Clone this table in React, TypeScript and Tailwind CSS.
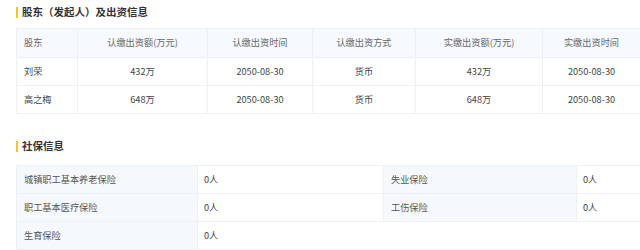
import React from 'react';

const font = { fontFamily: '"Noto Sans CJK SC", "Noto Sans", sans-serif' };

const holders = [
  { name: '刘荣', sub: '432万', subDate: '2050-08-30', way: '货币', paid: '432万', paidDate: '2050-08-30' },
  { name: '高之梅', sub: '648万', subDate: '2050-08-30', way: '货币', paid: '648万', paidDate: '2050-08-30' },
];

const SectionTitle: React.FC<{ text: string; className?: string }> = ({ text, className }) => (
  <div className={`flex items-center h-[22px] ${className || ''}`}>
    <span className="w-[2px] h-[11px] bg-[#f7c326] mr-[4px]" />
    <span className="text-[10.5px] font-bold text-[#333]">{text}</span>
  </div>
);

export default function App() {
  const th = 'h-[29px] font-normal text-[#666] text-center border border-[#edf1f6] bg-[#f6f9fd]';
  const td = 'h-[28px] text-[#444] text-center border border-[#edf1f6]';
  const lab = 'h-[28px] text-left pl-[7px] text-[#555] border border-[#edf1f6] bg-[#f5f8fc]';
  const val = 'h-[28px] text-left pl-[6px] text-[#444] border border-[#edf1f6]';

  return (
    <div className="w-[640px] h-[250px] overflow-hidden bg-white pl-[16px]" style={font}>
      <SectionTitle text="股东（发起人）及出资信息" className="mt-[1px]" />
      <table className="mt-[5px] w-[624px] table-fixed border-collapse text-[9.2px]">
        <colgroup>
          <col className="w-[61px]" />
          <col className="w-[130px]" />
          <col className="w-[105px]" />
          <col className="w-[103px]" />
          <col className="w-[127px]" />
          <col className="w-[98px]" />
        </colgroup>
        <thead>
          <tr>
            <th className={`${th} pl-[7px]`} style={{ textAlign: 'left' }}>股东</th>
            <th className={th}>认缴出资额(万元)</th>
            <th className={th}>认缴出资时间</th>
            <th className={th}>认缴出资方式</th>
            <th className={th}>实缴出资额(万元)</th>
            <th className={th}>实缴出资时间</th>
          </tr>
        </thead>
        <tbody>
          {holders.map((h) => (
            <tr key={h.name}>
              <td className={`${td} pl-[7px]`} style={{ textAlign: 'left' }}>{h.name}</td>
              <td className={td}>{h.sub}</td>
              <td className={td}>{h.subDate}</td>
              <td className={td}>{h.way}</td>
              <td className={td}>{h.paid}</td>
              <td className={td}>{h.paidDate}</td>
            </tr>
          ))}
        </tbody>
      </table>

      <SectionTitle text="社保信息" className="mt-[21px]" />
      <table className="mt-[8px] w-[624px] table-fixed border-collapse text-[9.2px]">
        <colgroup>
          <col className="w-[181px]" />
          <col className="w-[186px]" />
          <col className="w-[193px]" />
          <col className="w-[64px]" />
        </colgroup>
        <tbody>
          <tr>
            <td className={lab}>城镇职工基本养老保险</td>
            <td className={val}>0人</td>
            <td className={lab}>失业保险</td>
            <td className={val}>0人</td>
          </tr>
          <tr>
            <td className={lab}>职工基本医疗保险</td>
            <td className={val}>0人</td>
            <td className={lab}>工伤保险</td>
            <td className={val}>0人</td>
          </tr>
          <tr>
            <td className={lab}>生育保险</td>
            <td className={val} colSpan={3}>0人</td>
          </tr>
        </tbody>
      </table>
    </div>
  );
}
